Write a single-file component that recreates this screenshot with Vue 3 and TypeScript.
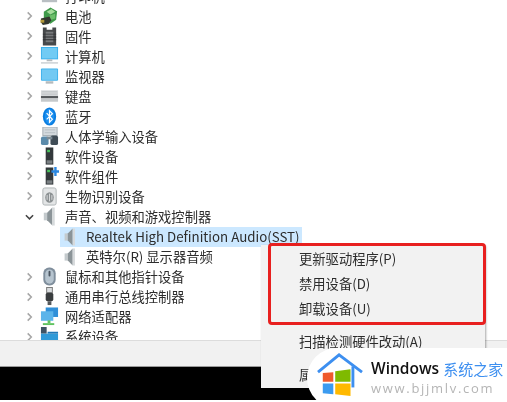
<template>
  <div class="screen">
    <div class="tree">
      <div v-for="row in rows" :key="row.label" class="row" :class="{ child: row.child, selected: row.selected }">
        <svg v-if="!row.child" class="chevron" viewBox="0 0 10 10">
          <path :d="row.open ? 'M1 3l4 4 4-4' : 'M3 1l4 4-4 4'" :stroke="row.open ? '#444' : '#a6a6a6'" stroke-width="1.7" fill="none" />
        </svg>
        <svg class="icon" viewBox="0 0 20 20" v-html="icons[row.icon]"></svg>
        <span class="label">{{ row.label }}</span>
      </div>
    </div>
    <div class="statusbar"></div>
    <div class="blackbar"></div>

    <div class="menu">
      <div v-for="item in menuItems" :key="item.text" class="menu-item" :class="{ sep: item.sep }">{{ item.text }}</div>
    </div>
    <div class="redbox"></div>

    <div class="watermark">
      <svg class="logo" viewBox="0 0 48 46">
        <path d="M1 20L23 2l24 18" fill="none" stroke="#3d8ff0" stroke-width="3" />
        <path d="M37.500 14v22" fill="none" stroke="#3d8ff0" stroke-width="3" />
        <path d="M6 21l11-1v10H6z" fill="#ef5a2c" />
        <path d="M19 19l16-2v13H19z" fill="#7fba00" />
        <path d="M6 32h11v11l-11-1z" fill="#3b9bf0" />
        <path d="M19 32h16v13l-16-2z" fill="#ffb900" />
      </svg>
      <div class="brand">
        <div class="brand-top"><span class="win">Windows</span><span class="cn">系统之家</span></div>
        <div class="url">www.bjjmlv.com</div>
      </div>
    </div>
  </div>
</template>

<script setup lang="ts">
interface Row {
  label: string
  icon: string
  child?: boolean
  open?: boolean
  selected?: boolean
}

const speaker = '<path d="M4 6h3.500v8H4z" fill="#c4cacd"/><path d="M7.500 6L13 0.500v19L7.500 14z" fill="#8b9498"/><path d="M13 0.500h2.500v19H13z" fill="#d6dadc"/>'
const box = '<rect x="6" y="0.500" width="8" height="18" fill="#33383b"/><rect x="7.500" y="3" width="3" height="2.500" fill="#49c05c"/><rect x="7" y="14" width="6" height="3.500" fill="#7a8083"/>'

const icons: Record<string, string> = {
  printer: '<rect x="2" y="6" width="16" height="10" fill="#b9bfc3"/><rect x="5" y="1" width="10" height="6" fill="#eee"/>',
  battery: '<path d="M4 5l7-4.500 7 4-1 9-6 4-7-3z" fill="#3f9a4a"/><path d="M7 5l5-3 4 3-5 3z" fill="#a6dd9c"/><path d="M10 9l6-2v5l-6 2z" fill="#6cbf6a"/><path d="M1 12l9-2 2 4-3 4-6 1-2-3z" fill="#34372f"/><path d="M0.500 13.500h4v3h-4z" fill="#b59a3a"/>',
  firmware: '<path d="M3 0.500h4v2.500h6V0.500h4v19H3z" fill="#47494b"/><path d="M6 5h8v11H6z" fill="#77797b"/><path d="M3 7h14v1H3zM3 10h14v1H3zM3 13h14v1H3z" fill="#2f3133"/>',
  computer: '<rect x="1" y="0" width="18" height="13" fill="#3fb1ec"/><rect x="2" y="1" width="16" height="11" fill="#71cbf4"/><path d="M7 13h6v2H7z" fill="#b4babd"/><path d="M1 16h18v1.500H1z" fill="#c9cfd2"/>',
  monitor: '<rect x="1" y="1.500" width="18" height="13" rx="1" fill="#3fb1ec"/><rect x="2" y="2.500" width="16" height="11" fill="#72c9f3"/><path d="M6 15h8v2.500H6z" fill="#b4babd"/>',
  keyboard: '<rect x="1" y="3.500" width="18" height="6" fill="#d5d8da"/><path d="M2 5h16M2 7.500h16" stroke="#c0c4c7"/><rect x="1" y="9.500" width="18" height="2.500" fill="#55595c"/><rect x="1" y="12" width="18" height="3.500" fill="#c5c9cb"/>',
  bluetooth: '<ellipse cx="10" cy="10" rx="7" ry="9.500" fill="#0a7de0"/><ellipse cx="10" cy="10" rx="5" ry="8" fill="#1b8ff0"/><path d="M7 6.500l6 6.500-3 3V4l3 3-6 6" fill="none" stroke="#fff" stroke-width="1.300"/>',
  hid: '<rect x="3" y="0" width="15" height="9" fill="#d4dade" stroke="#a5adb3"/><path d="M5 3h11M5 6h11" stroke="#b6bec3"/><rect x="1" y="10" width="8" height="9" rx="2" fill="#5b8bab"/><rect x="11" y="9" width="8" height="10" rx="2" fill="#3f4c56"/><path d="M7 10h6v3H7z" fill="#7b8a94"/>',
  software: box,
  component: box + '<path d="M15 0v3.500h-3v2.500h3v3.500h2.500V6H20V3.500h-2.500V0z" fill="#2a86e0"/>',
  biometric: '<rect x="3" y="1" width="14" height="18" rx="2" fill="#e3e5e6" stroke="#aeb3b5"/><ellipse cx="10" cy="11" rx="4.500" ry="5.500" fill="#8b9092"/><path d="M7.500 8.500v5M10 7v8M12.500 8.500v5" stroke="#dcdedf"/>',
  speaker,
  mouse: '<rect x="3.500" y="0.500" width="13" height="19" rx="6" fill="#7f8e9c"/><rect x="5.500" y="2.500" width="9" height="15" rx="4.500" fill="#b6c4cf"/><rect x="9" y="4" width="2" height="6" rx="1" fill="#4a5560"/>',
  usb: '<rect x="7" y="0.500" width="6" height="5.500" fill="#d9dcde" stroke="#777"/><rect x="6" y="6" width="8" height="9" rx="2" fill="#3a3d3f"/><path d="M8 15h4v4H8z" fill="#55595c"/>',
  network: '<rect x="6" y="0.500" width="13" height="10" fill="#2f8fd8"/><rect x="1" y="4.500" width="13" height="10" fill="#5bb4ea"/><path d="M3 17h12v2H3z" fill="#5fc35f"/><path d="M8 14h3v3H8z" fill="#5fc35f"/>',
  system: '<rect x="1" y="0" width="6" height="7" fill="#3e5364"/><path d="M1 7h18v13H1z" fill="#2f9ad8"/><path d="M8 5h11v2H8z" fill="#1e78b8"/>',
}

const rows: Row[] = [
  { label: '打印机', icon: 'printer' },
  { label: '电池', icon: 'battery' },
  { label: '固件', icon: 'firmware' },
  { label: '计算机', icon: 'computer' },
  { label: '监视器', icon: 'monitor' },
  { label: '键盘', icon: 'keyboard' },
  { label: '蓝牙', icon: 'bluetooth' },
  { label: '人体学输入设备', icon: 'hid' },
  { label: '软件设备', icon: 'software' },
  { label: '软件组件', icon: 'component' },
  { label: '生物识别设备', icon: 'biometric' },
  { label: '声音、视频和游戏控制器', icon: 'speaker', open: true },
  { label: 'Realtek High Definition Audio(SST)', icon: 'speaker', child: true, selected: true },
  { label: '英特尔(R) 显示器音频', icon: 'speaker', child: true },
  { label: '鼠标和其他指针设备', icon: 'mouse' },
  { label: '通用串行总线控制器', icon: 'usb' },
  { label: '网络适配器', icon: 'network' },
  { label: '系统设备', icon: 'system' },
]

const menuItems = [
  { text: '更新驱动程序(P)' },
  { text: '禁用设备(D)' },
  { text: '卸载设备(U)' },
  { text: '扫描检测硬件改动(A)', sep: true },
  { text: '属性(R)', sep: true },
]
</script>

<style>
html, body {
  margin: 0;
  background: #fff;
}
</style>

<style scoped>
.screen {
  position: relative;
  width: 507px;
  height: 402px;
  overflow: hidden;
  background: #fff;
  color: #2c2c2c;
  font-family: "Noto Sans CJK SC", "Noto Sans", sans-serif;
  font-size: 13.3px;
  filter: blur(0.4px);
}

.tree {
  height: 340px;
  overflow: hidden;
}

.row {
  display: flex;
  align-items: center;
  height: 20.05px;
  padding-left: 25px;
  white-space: nowrap;
}

.row:first-child {
  margin-top: -14px;
}

.chevron {
  width: 9px;
  height: 10px;
  flex: none;
}

.icon {
  width: 19px;
  height: 19px;
  flex: none;
  margin-left: 6px;
}

.label {
  margin-left: 6px;
}

.row.child {
  margin-left: 60px;
  padding-left: 0;
}

.row.child .icon {
  margin-left: 0;
  width: 20px;
  height: 18px;
}

.selected {
  width: 242px;
  background: #cce8ff;
}

.statusbar {
  height: 27px;
  background: #f1f1f1;
  border-top: 1px solid #dcdcdc;
  border-bottom: 1px solid #9a9a9a;
  box-sizing: border-box;
}

.blackbar {
  height: 33px;
  background: #000;
}

.menu {
  position: absolute;
  left: 261px;
  top: 245px;
  width: 224px;
  height: 143px;
  box-sizing: border-box;
  padding: 1px 0 0 38px;
  background: #f2f2f2;
  box-shadow: 1px 1px 2px rgba(0, 0, 0, 0.35);
}

.menu-item {
  height: 25px;
  line-height: 25px;
  white-space: nowrap;
}

.menu-item.sep {
  margin-top: 8px;
}

.redbox {
  position: absolute;
  left: 268px;
  top: 243px;
  width: 218px;
  height: 82px;
  box-sizing: border-box;
  border: 3px solid #e8201f;
  border-radius: 4px;
}

.watermark {
  position: absolute;
  left: 307px;
  top: 348px;
  width: 240px;
  height: 60px;
  display: flex;
  align-items: flex-start;
  background: #fff;
  border-radius: 30px;
}

.logo {
  width: 46px;
  height: 44px;
  margin: 5px 0 0 10px;
  flex: none;
}

.brand {
  margin-left: 8px;
  padding-top: 8px;
  white-space: nowrap;
}

.brand-top {
  display: flex;
  align-items: center;
  gap: 4px;
  height: 24px;
}

.win {
  font-family: "Open Sans", sans-serif;
  font-size: 15.5px;
  font-weight: 600;
  color: #111;
}

.cn {
  font-size: 15px;
  color: #3d8ff0;
}

.url {
  font-family: "Open Sans", sans-serif;
  font-size: 13px;
  letter-spacing: 1.7px;
  color: #b5b5b5;
  line-height: 16px;
}
</style>
